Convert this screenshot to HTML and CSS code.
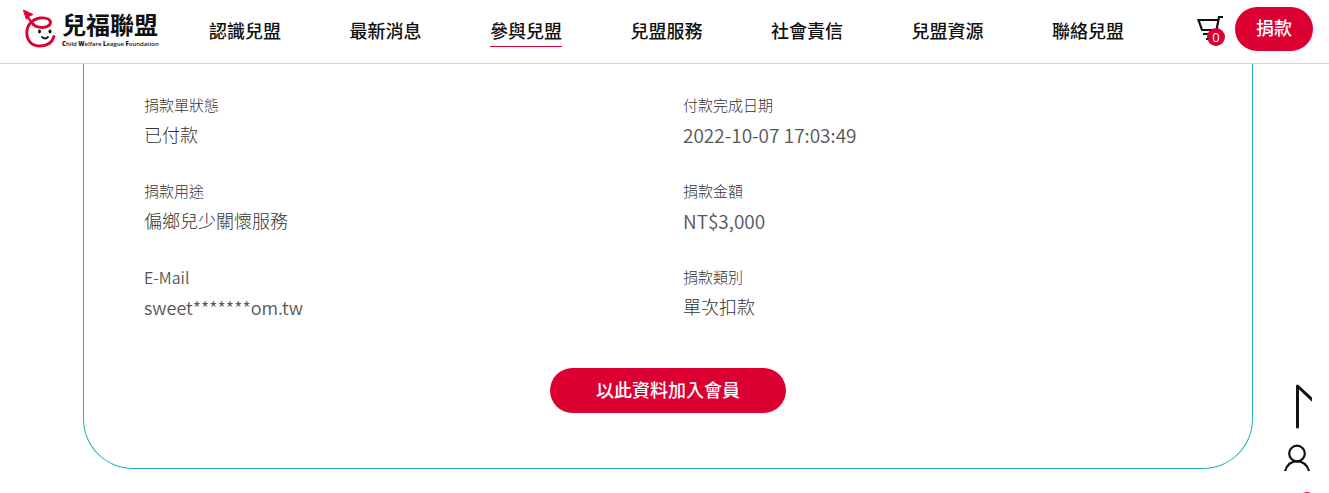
FILE: index.html
```html
<!DOCTYPE html>
<html lang="zh-Hant">
  <head>
    <meta charset="UTF-8" />
    <meta name="viewport" content="width=device-width, initial-scale=1.0" />
    <title>兒福聯盟</title>
    <link rel="stylesheet" href="styles.css">
  </head>
  <body>
    <header class="header">
      <a class="logo" href="#">
        <svg class="logo-mark" viewBox="0 0 34 40" width="34" height="40" fill="none" stroke="#dc0032" stroke-linecap="round" stroke-linejoin="round">
          <path d="M4.500 4.500C5.500 8 7 10.500 10 13.500" stroke-width="2.400" />
          <path d="M1.800 1.200L11 5.500 7.500 7 4.500 10Z" fill="#dc0032" stroke-width="1" />
          <path d="M10 13.500C13 19.500 24 20 28 15.500C30 11 25 8 18 9C9 10.500 4.800 17 4.800 23.500C4.800 32 10 37 18 37C25 37 30 34 32 27.500" stroke-width="2.800" />
          <ellipse cx="17.500" cy="22.500" rx="1.500" ry="2" fill="#111" stroke="none" />
          <ellipse cx="28" cy="22.500" rx="1.500" ry="2" fill="#111" stroke="none" />
          <path d="M20 28Q23 31 26 28" stroke="#111" stroke-width="1.800" />
        </svg>
        <span class="logo-text">
          <span class="logo-name">兒福聯盟</span>
          <span class="logo-sub"><b>C</b>hild <b>W</b>elfare <b>L</b>eague <b>F</b>oundation</span>
        </span>
      </a>
      <nav class="nav">
        <a href="#">認識兒盟</a>
        <a href="#">最新消息</a>
        <a class="active" href="#">參與兒盟</a>
        <a href="#">兒盟服務</a>
        <a href="#">社會責信</a>
        <a href="#">兒盟資源</a>
        <a href="#">聯絡兒盟</a>
      </nav>
      <div class="header-tools">
        <a class="cart" href="#" aria-label="捐款車">
          <svg viewBox="0 0 28 28" width="28" height="28" fill="none" stroke="#111" stroke-width="2.200">
            <path d="M26 2H22L19.500 15H5L1.500 5H21" />
            <path d="M6 19H19M9 24h3" />
          </svg>
          <span class="cart-num">0</span>
        </a>
        <button class="btn btn-donate">捐款</button>
      </div>
    </header>

    <main class="container">
      <section class="card">
        <dl class="info">
          <div class="item"><dt>捐款單狀態</dt><dd>已付款</dd></div>
          <div class="item"><dt>付款完成日期</dt><dd class="latin">2022-10-07 17:03:49</dd></div>
          <div class="item"><dt>捐款用途</dt><dd>偏鄉兒少關懷服務</dd></div>
          <div class="item"><dt>捐款金額</dt><dd class="latin">NT$3,000</dd></div>
          <div class="item"><dt class="latin">E-Mail</dt><dd class="latin email">sweet*******om.tw</dd></div>
          <div class="item"><dt>捐款類別</dt><dd>單次扣款</dd></div>
        </dl>
        <button class="btn btn-join">以此資料加入會員</button>
      </section>
    </main>

    <aside class="side">
      <a href="#" aria-label="回到頂端">
        <svg viewBox="0 0 30 46" width="30" height="46" fill="none" stroke="#111" stroke-width="3">
          <path d="M15.500 44V3L33 19.500" stroke-linejoin="round" stroke-linecap="round" />
        </svg>
      </a>
      <a href="#" aria-label="會員">
        <svg viewBox="0 0 30 30" width="30" height="30" fill="none" stroke="#111" stroke-width="2.200">
          <circle cx="15" cy="10.500" r="7.800" />
          <path d="M3 28C5 21.500 9.500 18.300 15 18.300S25 21.500 27 28" />
        </svg>
      </a>
      <span class="side-num"></span>
    </aside>
  </body>
</html>
```
FILE: styles.css
```css
* {
  margin: 0;
  padding: 0;
  box-sizing: border-box;
}
body {
  background: #fff;
  height: 100vh;
  overflow: hidden;
  font-family: "Open Sans", "Noto Sans CJK TC", sans-serif;
  font-size: 18px;
  color: #333;
}
a {
  color: #111;
  text-decoration: none;
}
svg {
  display: block;
}
.header {
  height: 64px;
  display: flex;
  align-items: center;
  padding: 0 16px 0 22px;
  border-bottom: 1px solid #d5d5d5;
  background: #fff;
}
.logo {
  width: 187px;
  display: flex;
  align-items: center;
  gap: 6px;
  padding-bottom: 6px;
}
.logo-text {
  display: flex;
  flex-direction: column;
}
.logo-name {
  font-size: 24px;
  line-height: 30px;
  font-weight: 700;
}
.logo-sub {
  font-family: "Open Sans", sans-serif;
  font-size: 6px;
  line-height: 8px;
  font-weight: 600;
  white-space: nowrap;
}
.nav {
  flex: 1;
  display: flex;
  justify-content: space-between;
}
.nav a {
  font-weight: 500;
  line-height: 30px;
  border-bottom: 1px solid transparent;
}
.nav .active {
  border-color: #dc0032;
}
.header-tools {
  display: flex;
  align-items: center;
  gap: 10px;
  margin-left: 73px;
  padding-bottom: 6px;
}
.cart {
  position: relative;
}
.cart-num {
  position: absolute;
  right: 0;
  bottom: -3px;
  width: 18px;
  height: 18px;
  border-radius: 50%;
  background: #dc0032;
  color: #fff;
  font-size: 13px;
  line-height: 18px;
  text-align: center;
}
.btn {
  border: none;
  border-radius: 23px;
  background: #dc0032;
  color: #fff;
  font-family: inherit;
  font-size: 18px;
  font-weight: 500;
  padding-bottom: 3px;
  cursor: pointer;
}
.btn:hover {
  background: #b80029;
}
.btn-donate {
  width: 78px;
  height: 44px;
}
.container {
  padding: 0 76px 0 83px;
}
.card {
  padding: 29px 60px 55px;
  border: 1px solid #27b0bb;
  border-top: none;
  border-radius: 0 0 50px 50px;
}
.info {
  display: grid;
  grid-template-columns: 1fr 1fr;
  gap: 26px 30px;
  font-weight: 300;
}
.info dt {
  font-size: 15px;
  line-height: 24px;
}
.info dd {
  line-height: 36px;
}
.info .latin {
  font-family: "Noto Sans CJK TC", sans-serif;
  font-weight: 350;
  color: #555;
}
.info dt.latin {
  font-size: 16px;
}
.info dd.latin {
  font-size: 19px;
}
.info dd.email {
  font-size: 18px;
}
.btn-join {
  display: block;
  width: 236px;
  height: 45px;
  margin: 43px auto 0;
}
.side {
  position: fixed;
  right: 17px;
  bottom: 20px;
  display: flex;
  flex-direction: column;
  align-items: center;
  gap: 14px;
}
.side-num {
  position: absolute;
  right: -4px;
  bottom: -37px;
  width: 18px;
  height: 18px;
  border-radius: 50%;
  background: #dc0032;
}
```
